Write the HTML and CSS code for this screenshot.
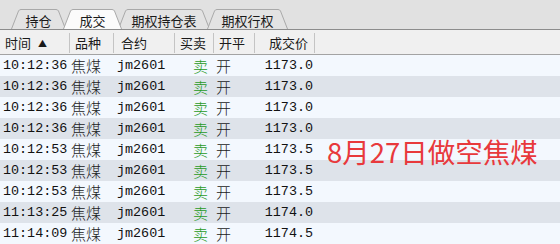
FILE: index.html
```html
<!DOCTYPE html>
<html lang="zh-CN">
<head>
    <meta charset="UTF-8">
    <title>成交</title>
    <link rel="stylesheet" href="styles.css">
</head>
<body>
    <div class="page">
        <div class="tabbar">
            <div class="tab tab-1">
                <svg class="tab-bg" width="55" height="20" viewBox="0 0 55 20"><path d="M0.5 20 L7.5 2 Q8.3 0.5 10 0.5 L45 0.5 Q46.7 0.5 47.5 2 L54.5 20" /></svg>
                <span>持仓</span>
            </div>
            <div class="tab tab-2 active">
                <svg class="tab-bg" width="59" height="20" viewBox="0 0 59 20"><path d="M0.5 20 L7.5 2 Q8.3 0.5 10 0.5 L49 0.5 Q50.7 0.5 51.5 2 L58.5 20" /></svg>
                <span>成交</span>
            </div>
            <div class="tab tab-3">
                <svg class="tab-bg" width="92" height="20" viewBox="0 0 92 20"><path d="M0.5 20 L7.5 2 Q8.3 0.5 10 0.5 L82 0.5 Q83.7 0.5 84.5 2 L91.5 20" /></svg>
                <span>期权持仓表</span>
            </div>
            <div class="tab tab-4">
                <svg class="tab-bg" width="81" height="20" viewBox="0 0 81 20"><path d="M0.5 20 L7.5 2 Q8.3 0.5 10 0.5 L71 0.5 Q72.7 0.5 73.5 2 L80.5 20" /></svg>
                <span>期权行权</span>
            </div>
        </div>

        <div class="head">
            <div class="hcell">时间 <span class="sort">▲</span></div>
            <div class="hcell">品种</div>
            <div class="hcell">合约</div>
            <div class="hcell">买卖</div>
            <div class="hcell">开平</div>
            <div class="hcell right">成交价</div>
        </div>

        <div class="rows">
            <div class="row"><span class="time">10:12:36</span><span class="name">焦煤</span><span class="code">jm2601</span><span class="side">卖</span><span class="open">开</span><span class="price">1173.0</span></div>
            <div class="row"><span class="time">10:12:36</span><span class="name">焦煤</span><span class="code">jm2601</span><span class="side">卖</span><span class="open">开</span><span class="price">1173.0</span></div>
            <div class="row"><span class="time">10:12:36</span><span class="name">焦煤</span><span class="code">jm2601</span><span class="side">卖</span><span class="open">开</span><span class="price">1173.0</span></div>
            <div class="row"><span class="time">10:12:36</span><span class="name">焦煤</span><span class="code">jm2601</span><span class="side">卖</span><span class="open">开</span><span class="price">1173.0</span></div>
            <div class="row"><span class="time">10:12:53</span><span class="name">焦煤</span><span class="code">jm2601</span><span class="side">卖</span><span class="open">开</span><span class="price">1173.5</span></div>
            <div class="row"><span class="time">10:12:53</span><span class="name">焦煤</span><span class="code">jm2601</span><span class="side">卖</span><span class="open">开</span><span class="price">1173.5</span></div>
            <div class="row"><span class="time">10:12:53</span><span class="name">焦煤</span><span class="code">jm2601</span><span class="side">卖</span><span class="open">开</span><span class="price">1173.5</span></div>
            <div class="row"><span class="time">11:13:25</span><span class="name">焦煤</span><span class="code">jm2601</span><span class="side">卖</span><span class="open">开</span><span class="price">1174.0</span></div>
            <div class="row"><span class="time">11:14:09</span><span class="name">焦煤</span><span class="code">jm2601</span><span class="side">卖</span><span class="open">开</span><span class="price">1174.5</span></div>
        </div>

        <div class="note">8月27日做空焦煤</div>
    </div>
</body>
</html>
```

FILE: styles.css
```css
body {
    margin: 0;
    background-color: #f3f8fe;
    font-family: "Noto Sans CJK SC", "Noto Sans", sans-serif;
    color: #1a1a1a;
    overflow: hidden;
}
.page {
    position: relative;
    width: 560px;
    height: 244px;
}
.tabbar {
    display: flex;
    align-items: flex-end;
    height: 29px;
    padding-left: 11px;
    background-color: #e1e1e1;
    border-bottom: 1px solid #8c8c8c;
}
.tab {
    position: relative;
    height: 20px;
    display: flex;
    justify-content: center;
    font-size: 13px;
    line-height: 20px;
    color: #1a1a1a;
}
.tab span {
    position: relative;
    padding-top: 2px;
}
.tab-bg {
    position: absolute;
    left: 0;
    top: 0;
}
.tab-bg path {
    fill: #e3e3e3;
    stroke: #a9a9a9;
    stroke-width: 1;
}
.tab.active {
    z-index: 2;
}
.tab.active .tab-bg path {
    fill: #fbfbfb;
}
.tab-1 { width: 55px; }
.tab-2 { width: 59px; margin-left: -3px; }
.tab-3 { width: 92px; margin-left: -4px; }
.tab-4 { width: 81px; margin-left: -3px; }

.head,
.row {
    display: grid;
    grid-template-columns: 70px 44px 61px 39px 41px 60px 1fr;
}
.head {
    height: 19px;
    padding: 3px 0 2px;
    background-color: #f0f0f0;
    border-bottom: 1px solid #a3a3a3;
    font-size: 13px;
    line-height: 19px;
}
.hcell {
    padding-left: 5px;
    border-right: 1px solid #c4c4c4;
    white-space: nowrap;
}
.hcell:nth-child(3) {
    padding-left: 7px;
}
.hcell.right {
    text-align: right;
    padding-right: 6px;
}
.sort {
    font-size: 9px;
    margin-left: 4px;
    vertical-align: 1px;
}
.row {
    height: 21px;
    line-height: 22px;
    background-color: #f3f8fe;
}
.row:nth-child(even) {
    background-color: #dee3ea;
}
.time,
.code,
.price {
    font-family: "Liberation Mono", monospace;
    font-size: 13.4px;
    color: #111;
}
.time { padding-left: 3px; }
.name {
    font-size: 15px;
    font-weight: 300;
    padding-left: 1px;
}
.code { padding-left: 3px; }
.side {
    color: #1f9a24;
    font-size: 15px;
    font-weight: 300;
    padding-left: 18px;
}
.open {
    font-size: 15px;
    font-weight: 300;
    padding-left: 2px;
}
.price {
    text-align: right;
    padding-right: 2px;
}
.note {
    position: absolute;
    left: 327px;
    top: 136px;
    font-size: 27.5px;
    line-height: 30px;
    color: #e8393c;
    white-space: nowrap;
}
```
